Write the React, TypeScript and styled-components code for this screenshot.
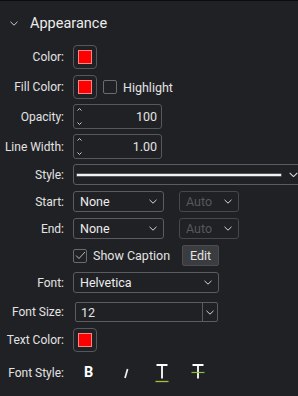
import React from 'react';
import styled, { createGlobalStyle } from 'styled-components';

const GlobalStyle = createGlobalStyle`
  html, body {
    margin: 0;
    padding: 0;
    background: #202124;
    overflow: hidden;
  }
  body {
    font-family: Roboto, "Liberation Sans", sans-serif;
    font-size: 12px;
    color: #e3e3e3;
  }
`;

const Panel = styled.div`
  width: 298px;
  height: 396px;
  border-top: 1px solid #0c0c0d;
  box-sizing: border-box;
  overflow: hidden;
`;

const Header = styled.div`
  display: flex;
  align-items: center;
  height: 44px;
  padding-left: 10px;
  gap: 12px;
  font-size: 14.5px;
  color: #ececec;
`;

const Rows = styled.div`
  display: flex;
  flex-direction: column;
  gap: 6px;
`;

const Row = styled.div<{ h?: number; mt?: number }>`
  display: grid;
  grid-template-columns: 64px auto;
  column-gap: 9px;
  align-items: center;
  height: ${({ h }) => h ?? 24}px;
  margin-top: ${({ mt }) => mt ?? 0}px;
`;

const Label = styled.div`
  text-align: right;
  white-space: nowrap;
`;

const Controls = styled.div`
  display: flex;
  align-items: center;
  gap: 6px;
  height: 100%;
`;

const Swatch = styled.div`
  width: 24px;
  height: 24px;
  box-sizing: border-box;
  border: 1px solid #55575b;
  border-radius: 4px;
  display: flex;
  align-items: center;
  justify-content: center;
  &::after {
    content: '';
    width: 14px;
    height: 14px;
    box-sizing: border-box;
    background: #ff0000;
    border: 1px solid #f08a8a;
  }
`;

const CheckBox = styled.div`
  width: 14px;
  height: 14px;
  box-sizing: border-box;
  border: 1px solid #6a6b6e;
  border-radius: 2px;
  display: flex;
  align-items: center;
  justify-content: center;
`;

const CheckLabel = styled.span`
  font-size: 12.5px;
`;

const Spin = styled.div`
  width: 89px;
  height: 25px;
  box-sizing: border-box;
  border: 1px solid #56585c;
  border-radius: 3px;
  display: flex;
  align-items: center;
  padding: 0 4px 0 3px;
  font-size: 12.5px;
`;

const Arrows = styled.div`
  display: flex;
  flex-direction: column;
  justify-content: space-between;
  height: 17px;
`;

const SpinValue = styled.div`
  flex: 1;
  text-align: right;
`;

const Combo = styled.div<{ w: number; disabled?: boolean; gapLeft?: number }>`
  width: ${({ w }) => w}px;
  height: 100%;
  box-sizing: border-box;
  border: 1px solid ${({ disabled }) => (disabled ? '#46484b' : '#5a5c60')};
  border-radius: 3px;
  display: flex;
  align-items: center;
  padding: 0 6px;
  margin-left: ${({ gapLeft }) => gapLeft ?? 0}px;
  color: ${({ disabled }) => (disabled ? '#56585c' : '#ededed')};
  font-size: 12.5px;
  flex-shrink: 0;
`;

const ComboText = styled.div`
  flex: 1;
`;

const LineSample = styled.div`
  flex: 1;
  height: 2px;
  margin-left: -3px;
  margin-right: 8px;
  background: #f2f2f2;
  box-shadow: 0 0 0 0.5px #8a8a8a;
`;

const EditButton = styled.div`
  width: 37px;
  height: 100%;
  box-sizing: border-box;
  background: #3b3c3f;
  border: 1px solid #4c4d50;
  border-radius: 2px;
  display: flex;
  align-items: center;
  justify-content: center;
  font-size: 12.5px;
  margin-left: 6px;
`;

const EditCombo = styled.div`
  width: 143px;
  height: 100%;
  box-sizing: border-box;
  border: 1px solid #5a5c60;
  border-radius: 2px;
  display: flex;
  align-items: stretch;
  margin-left: 2px;
  font-size: 12.5px;
`;

const EditField = styled.div`
  flex: 1;
  display: flex;
  align-items: center;
  padding-left: 5px;
  border-right: 1px solid #5a5c60;
`;

const DropPart = styled.div`
  width: 14px;
  display: flex;
  align-items: center;
  justify-content: center;
`;

const StyleButtons = styled.div`
  display: flex;
  align-items: center;
  padding-left: 11px;
`;

const StyleBtn = styled.div<{ w: number }>`
  width: ${({ w }) => w}px;
  flex-shrink: 0;
  display: flex;
  align-items: center;
`;

const BoldGlyph = styled.span`
  font-family: Roboto, "Liberation Sans", sans-serif;
  font-weight: 700;
  font-size: 14.5px;
  color: #ffffff;
  line-height: 1;
`;

const Chevron = ({ size = 8, color = '#d8d8d8' }: { size?: number; color?: string }) => (
  <svg width={size} height={size / 2 + 1} viewBox="0 0 8 5" fill="none">
    <path d="M0.5 0.8 L4 4.2 L7.5 0.8" stroke={color} strokeWidth="1" />
  </svg>
);

const Caret = ({ up }: { up?: boolean }) => (
  <svg width="5" height="3" viewBox="0 0 5 3" fill="none">
    <path d={up ? 'M0.5 2.5 L2.5 0.5 L4.5 2.5' : 'M0.5 0.5 L2.5 2.5 L4.5 0.5'} stroke="#cfcfcf" strokeWidth="1" />
  </svg>
);

const Check = () => (
  <svg width="11" height="9" viewBox="0 0 11 9" fill="none">
    <path d="M1 4.5 L4 7.5 L10 1" stroke="#b8b8b8" strokeWidth="1" />
  </svg>
);

const SpinBox = ({ value }: { value: string }) => (
  <Spin>
    <Arrows>
      <Caret up />
      <Caret />
    </Arrows>
    <SpinValue>{value}</SpinValue>
  </Spin>
);

const Select = ({ w, text, disabled, gapLeft }: { w: number; text: string; disabled?: boolean; gapLeft?: number }) => (
  <Combo w={w} disabled={disabled} gapLeft={gapLeft}>
    <ComboText>{text}</ComboText>
    <Chevron size={8} />
  </Combo>
);

const ItalicIcon = () => (
  <svg width="6" height="14" viewBox="0 0 6 14">
    <path d="M4.6 3 L2 12" stroke="#f0f0f0" strokeWidth="1.7" />
  </svg>
);

const UnderlineIcon = () => (
  <svg width="14" height="20" viewBox="0 0 14 20">
    <path d="M1.5 2 H12.5 M7 2 V15.5" stroke="#ffffff" strokeWidth="1.8" />
    <path d="M0.5 18.5 H13.5" stroke="#a3c23a" strokeWidth="1.3" />
  </svg>
);

const StrikeIcon = () => (
  <svg width="14" height="20" viewBox="0 0 14 20">
    <path d="M1.5 2 H12.5 M7 2 V15.5" stroke="#ffffff" strokeWidth="1.8" />
    <path d="M0.5 9.5 H13.5" stroke="#8fbf3a" strokeWidth="1.2" />
  </svg>
);

export default function App() {
  return (
    <>
      <GlobalStyle />
      <Panel>
        <Header>
          <Chevron size={8} color="#cfcfcf" />
          <span>Appearance</span>
        </Header>
        <Rows>
          <Row>
            <Label>Color:</Label>
            <Controls>
              <Swatch />
            </Controls>
          </Row>
          <Row>
            <Label>Fill Color:</Label>
            <Controls>
              <Swatch />
              <CheckBox />
              <CheckLabel>Highlight</CheckLabel>
            </Controls>
          </Row>
          <Row mt={-1}>
            <Label>Opacity:</Label>
            <Controls>
              <SpinBox value="100" />
            </Controls>
          </Row>
          <Row>
            <Label>Line Width:</Label>
            <Controls>
              <SpinBox value="1.00" />
            </Controls>
          </Row>
          <Row h={21}>
            <Label>Style:</Label>
            <Controls>
              <Combo w={232}>
                <LineSample />
                <Chevron size={9} />
              </Combo>
            </Controls>
          </Row>
          <Row h={21}>
            <Label>Start:</Label>
            <Controls>
              <Select w={91} text="None" />
              <Select w={60} text="Auto" disabled gapLeft={9} />
            </Controls>
          </Row>
          <Row h={21}>
            <Label>End:</Label>
            <Controls>
              <Select w={91} text="None" />
              <Select w={60} text="Auto" disabled gapLeft={9} />
            </Controls>
          </Row>
          <Row h={21}>
            <span />
            <Controls>
              <CheckBox>
                <Check />
              </CheckBox>
              <CheckLabel>Show Caption</CheckLabel>
              <EditButton>Edit</EditButton>
            </Controls>
          </Row>
          <Row h={21}>
            <Label>Font:</Label>
            <Controls>
              <Select w={146} text="Helvetica" />
            </Controls>
          </Row>
          <Row h={20} mt={3}>
            <Label>Font Size:</Label>
            <Controls>
              <EditCombo>
                <EditField>12</EditField>
                <DropPart>
                  <Chevron size={8} />
                </DropPart>
              </EditCombo>
            </Controls>
          </Row>
          <Row>
            <Label>Text Color:</Label>
            <Controls>
              <Swatch />
            </Controls>
          </Row>
          <Row mt={3}>
            <Label>Font Style:</Label>
            <Controls>
              <StyleButtons>
                <StyleBtn w={39}><BoldGlyph>B</BoldGlyph></StyleBtn>
                <StyleBtn w={32}><ItalicIcon /></StyleBtn>
                <StyleBtn w={36}><UnderlineIcon /></StyleBtn>
                <StyleBtn w={20}><StrikeIcon /></StyleBtn>
              </StyleButtons>
            </Controls>
          </Row>
        </Rows>
      </Panel>
    </>
  );
}
